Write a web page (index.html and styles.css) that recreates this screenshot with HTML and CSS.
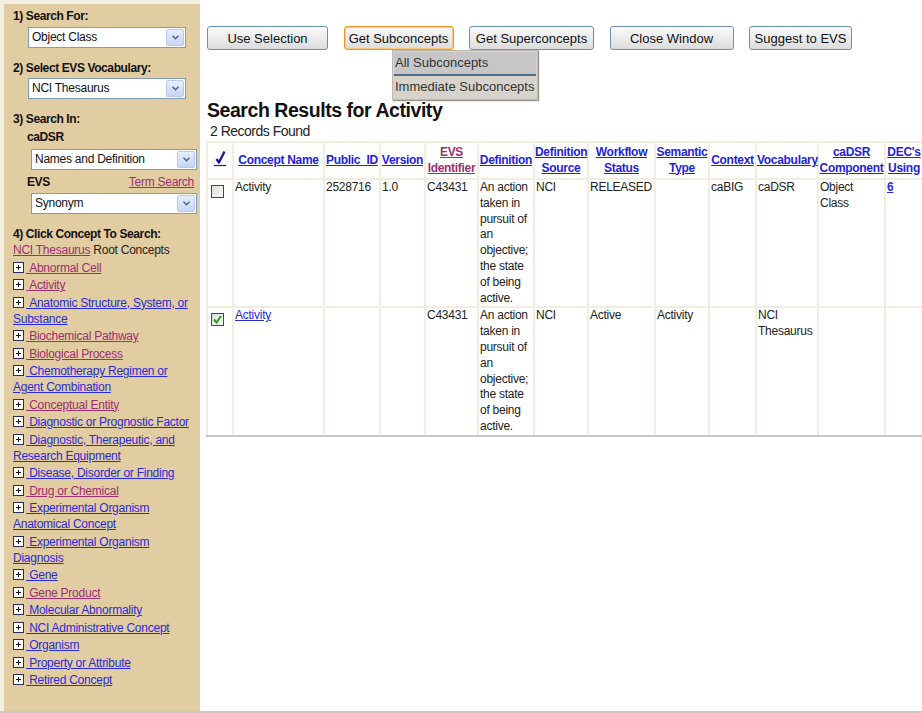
FILE: index.html
```html
<!DOCTYPE html>
<html>
<head>
<meta charset="utf-8">
<link rel="stylesheet" href="styles.css">
</head>
<body>
<div class="page">
  <div class="sidebar">
    <div class="sh">1) Search For:</div>
    <div class="sel s1"><span class="sel-text">Object Class</span><span class="sel-btn"><svg width="7" height="5" viewBox="0 0 7 5"><path d="M0.5 0.8 L3.5 3.8 L6.5 0.8" fill="none" stroke="#4d6185" stroke-width="1.4"/></svg></span></div>
    <div class="sh gap">2) Select EVS Vocabulary:</div>
    <div class="sel s2"><span class="sel-text">NCI Thesaurus</span><span class="sel-btn"><svg width="7" height="5" viewBox="0 0 7 5"><path d="M0.5 0.8 L3.5 3.8 L6.5 0.8" fill="none" stroke="#4d6185" stroke-width="1.4"/></svg></span></div>
    <div class="sh gap">3) Search In:</div>
    <div class="sh sub">caDSR</div>
    <div class="sel s3"><span class="sel-text">Names and Definition</span><span class="sel-btn"><svg width="7" height="5" viewBox="0 0 7 5"><path d="M0.5 0.8 L3.5 3.8 L6.5 0.8" fill="none" stroke="#4d6185" stroke-width="1.4"/></svg></span></div>
    <div class="evs-row"><span class="sh">EVS</span><a class="visited" href="#">Term Search</a></div>
    <div class="sel s4"><span class="sel-text">Synonym</span><span class="sel-btn"><svg width="7" height="5" viewBox="0 0 7 5"><path d="M0.5 0.8 L3.5 3.8 L6.5 0.8" fill="none" stroke="#4d6185" stroke-width="1.4"/></svg></span></div>
    <div class="sh gap">4) Click Concept To Search:</div>
    <div class="root"><a class="visited" href="#">NCI Thesaurus</a> Root Concepts</div>
    <ul class="tree">
      <li><span class="plus"></span> <a class="visited" href="#">&nbsp;Abnormal Cell</a></li>
      <li><span class="plus"></span> <a class="visited" href="#">&nbsp;Activity</a></li>
      <li><span class="plus"></span> <a href="#">&nbsp;Anatomic Structure, System, or Substance</a></li>
      <li><span class="plus"></span> <a class="visited" href="#">&nbsp;Biochemical Pathway</a></li>
      <li><span class="plus"></span> <a class="visited" href="#">&nbsp;Biological Process</a></li>
      <li><span class="plus"></span> <a href="#">&nbsp;Chemotherapy Regimen or Agent Combination</a></li>
      <li><span class="plus"></span> <a class="visited" href="#">&nbsp;Conceptual Entity</a></li>
      <li><span class="plus"></span> <a href="#">&nbsp;Diagnostic or Prognostic Factor</a></li>
      <li><span class="plus"></span> <a href="#">&nbsp;Diagnostic, Therapeutic, and Research Equipment</a></li>
      <li><span class="plus"></span> <a href="#">&nbsp;Disease, Disorder or Finding</a></li>
      <li><span class="plus"></span> <a class="visited" href="#">&nbsp;Drug or Chemical</a></li>
      <li><span class="plus"></span> <a href="#">&nbsp;Experimental Organism Anatomical Concept</a></li>
      <li><span class="plus"></span> <a href="#">&nbsp;Experimental Organism Diagnosis</a></li>
      <li><span class="plus"></span> <a href="#">&nbsp;Gene</a></li>
      <li><span class="plus"></span> <a class="visited" href="#">&nbsp;Gene Product</a></li>
      <li><span class="plus"></span> <a href="#">&nbsp;Molecular Abnormality</a></li>
      <li><span class="plus"></span> <a href="#">&nbsp;NCI Administrative Concept</a></li>
      <li><span class="plus"></span> <a href="#">&nbsp;Organism</a></li>
      <li><span class="plus"></span> <a href="#">&nbsp;Property or Attribute</a></li>
      <li><span class="plus"></span> <a href="#">&nbsp;Retired Concept</a></li>
    </ul>
  </div>
  <div class="main">
    <div class="buttons">
      <button class="btn b-use">Use Selection</button>
      <button class="btn b-sub focus">Get Subconcepts</button>
      <button class="btn b-super">Get Superconcepts</button>
      <button class="btn b-close">Close Window</button>
      <button class="btn b-suggest">Suggest to EVS</button>
    </div>
    <div class="menu">
      <div class="menu-item hl">All Subconcepts</div>
      <div class="menu-sep"></div>
      <div class="menu-item">Immediate Subconcepts</div>
    </div>
    <h1 class="title">Search Results for Activity</h1>
    <div class="count">2 Records Found</div>
    <table class="results">
      <colgroup>
        <col class="c1"><col class="c2"><col class="c3"><col class="c4"><col class="c5"><col class="c6"><col class="c7"><col class="c8"><col class="c9"><col class="c10"><col class="c11"><col class="c12"><col class="c13">
      </colgroup>
      <thead>
        <tr>
          <th><a href="#" class="chk-head"><svg width="12" height="17" viewBox="0 0 12 17"><path d="M2.5 9 L5 12.5 L10.5 1.5" fill="none" stroke="#1a1a99" stroke-width="2.4" stroke-linejoin="round"/><path d="M0 15.5 H12" stroke="#1a1a99" stroke-width="1.2"/></svg></a></th>
          <th><a href="#">Concept Name</a></th>
          <th><a href="#">Public_ID</a></th>
          <th><a href="#">Version</a></th>
          <th><a href="#" class="visited">EVS<br>Identifier</a></th>
          <th><a href="#">Definition</a></th>
          <th><a href="#">Definition<br>Source</a></th>
          <th><a href="#">Workflow<br>Status</a></th>
          <th><a href="#">Semantic<br>Type</a></th>
          <th><a href="#">Context</a></th>
          <th><a href="#">Vocabulary</a></th>
          <th><a href="#">caDSR<br>Component</a></th>
          <th><a href="#">DEC's<br>Using</a></th>
        </tr>
      </thead>
      <tbody>
        <tr>
          <td class="cb"><span class="box"></span></td>
          <td>Activity</td>
          <td>2528716</td>
          <td>1.0</td>
          <td>C43431</td>
          <td>An action taken in pursuit of an objective; the state of being active.</td>
          <td>NCI</td>
          <td>RELEASED</td>
          <td></td>
          <td>caBIG</td>
          <td>caDSR</td>
          <td>Object Class</td>
          <td><a href="#" class="bold">6</a></td>
        </tr>
        <tr>
          <td class="cb"><span class="box checked"><svg width="9" height="9" viewBox="0 0 9 9"><path d="M1 4.5 L3.5 7.5 L8 1" fill="none" stroke="#21a121" stroke-width="2"/></svg></span></td>
          <td><a href="#">Activity</a></td>
          <td></td>
          <td></td>
          <td>C43431</td>
          <td>An action taken in pursuit of an objective; the state of being active.</td>
          <td>NCI</td>
          <td>Active</td>
          <td>Activity</td>
          <td></td>
          <td>NCI Thesaurus</td>
          <td></td>
          <td></td>
        </tr>
      </tbody>
    </table>
  </div>
</div>
</body>
</html>
```

FILE: styles.css
```css
html, body {
  margin: 0;
  padding: 0;
}
body {
  font-family: "Liberation Sans", Arial, sans-serif;
  font-size: 12px;
  letter-spacing: -0.25px;
  color: #222;
  background: #f2efe3;
}
.page {
  display: flex;
  width: 922px;
  height: 713px;
  overflow: hidden;
  border-bottom: 2px solid #c9c9c6;
  box-sizing: border-box;
}
.sidebar {
  width: 196px;
  margin: 4px 0 0 4px;
  padding: 4px 3px 0 9px;
  box-sizing: border-box;
  background: #e2cca2;
  line-height: 16px;
  flex-shrink: 0;
}
.sh {
  font-weight: bold;
  font-size: 12px;
  letter-spacing: -0.4px;
  color: #111;
}
.sh.gap {
  margin-top: 12px;
}
.sh.sub {
  margin-left: 14px;
  margin-top: 2px;
}
.sel {
  display: flex;
  align-items: stretch;
  height: 21px;
  box-sizing: border-box;
  background: #fff;
  border: 1px solid #7f9db9;
  margin-top: 3px;
}
.sel-text {
  flex: 1;
  padding-left: 3px;
  line-height: 19px;
  color: #111;
}
.sel-btn {
  width: 16px;
  margin: 1px;
  display: flex;
  align-items: center;
  justify-content: center;
  background: linear-gradient(#e6eefc, #c7d6f5);
  border: 1px solid #b9c9ea;
  border-radius: 2px;
}
.s1, .s2 {
  margin-left: 15px;
  width: 158px;
}
.s2 { margin-top: 2px; }
.s3, .s4 {
  margin-left: 18px;
  width: 166px;
}
.s3 { margin-top: 4px; }
.evs-row {
  display: flex;
  justify-content: space-between;
  align-items: baseline;
  margin: 4px 3px 0 14px;
}
a {
  color: #2b2bd9;
  text-decoration: underline;
}
a.visited {
  color: #9c2f6f;
}
.root {
  color: #222;
}
.tree {
  list-style: none;
  margin: 0;
  padding: 0;
}
.tree li {
  line-height: 16px;
  padding-top: 1.5px;
}
.plus {
  display: inline-block;
  position: relative;
  width: 11px;
  height: 11px;
  box-sizing: border-box;
  border: 1px solid #2d2d5c;
  background: #fff;
  vertical-align: -1px;
  margin-right: -1px;
}
.plus::before, .plus::after {
  content: "";
  position: absolute;
  background: #111;
}
.plus::before {
  left: 2px;
  top: 4px;
  width: 5px;
  height: 1px;
}
.plus::after {
  left: 4px;
  top: 2px;
  width: 1px;
  height: 5px;
}
.main {
  position: relative;
  flex: 1;
  background: #fff;
  padding: 26px 0 0 6px;
  overflow: hidden;
}
.buttons {
  display: flex;
  gap: 15.5px;
  margin-left: 1px;
}
.btn {
  font-family: inherit;
  font-size: 13px;
  letter-spacing: 0;
  color: #111;
  height: 24px;
  padding: 0;
  border: 1px solid #6f8db0;
  border-radius: 3px;
  background: linear-gradient(#fafafa, #e8e8e8 60%, #dcdcdc);
  flex-shrink: 0;
}
.btn.focus {
  border-color: #e89a2c;
  box-shadow: inset 0 0 0 1px #f8c77a;
}
.b-use { width: 121px; }
.b-sub { width: 110px; }
.b-super { width: 125px; }
.b-close { width: 124px; }
.b-suggest { width: 103px; }
.menu {
  position: absolute;
  left: 192px;
  top: 50px;
  width: 146px;
  background: #d6d3cb;
  border: 1px solid #bcb8ae;
  box-shadow: 1px 1px 1px #9a968c;
  padding: 1px;
  box-sizing: border-box;
  z-index: 2;
  font-size: 13px;
  letter-spacing: 0;
  white-space: nowrap;
}
.menu-item {
  height: 22px;
  line-height: 22px;
  padding-left: 1px;
  color: #333;
}
.menu-item.hl {
  background: #c6c6c6;
}
.menu-sep {
  height: 2px;
  background: #4f6b88;
}
.title {
  margin: 48px 0 0 1px;
  font-size: 19.5px;
  letter-spacing: -0.45px;
  line-height: 24px;
  font-weight: bold;
  color: #111;
}
.count {
  margin: 1px 0 0 4px;
  font-size: 14px;
  letter-spacing: -0.5px;
  line-height: 17px;
  color: #222;
}
.results {
  margin-top: 1px;
  border-collapse: collapse;
  table-layout: fixed;
  width: 716px;
}
.results th, .results td {
  border: 2px solid #f1ede1;
  padding: 0 1px 0 1px;
  line-height: 15.8px;
  vertical-align: top;
  text-align: left;
  overflow: hidden;
}
.results th {
  height: 35px;
  vertical-align: middle;
  text-align: center;
  font-weight: bold;
  letter-spacing: -0.3px;
  padding: 0;
  white-space: nowrap;
  overflow: visible;
}
.results th a {
  color: #2323d6;
}
.results th a.visited {
  color: #9c2f6f;
}
.results td {
  color: #222;
}
.chk-head {
  display: inline-block;
  vertical-align: middle;
}
.c1 { width: 26px; }
.c2 { width: 91px; }
.c3 { width: 56px; }
.c4 { width: 45px; }
.c5 { width: 53px; }
.c6 { width: 56px; }
.c7 { width: 54px; }
.c8 { width: 67px; }
.c9 { width: 54px; }
.c10 { width: 47px; }
.c11 { width: 62px; }
.c12 { width: 67px; }
.c13 { width: 38px; }
.results td.cb {
  padding: 5px 0 0 3px;
}
.box {
  display: flex;
  align-items: center;
  justify-content: center;
  width: 13px;
  height: 13px;
  box-sizing: border-box;
  border: 1px solid #1c5180;
  background: linear-gradient(135deg, #dcdcd7, #fbfbf9);
}
.bold {
  font-weight: bold;
}
.results tbody tr:last-child td {
  border-bottom: 2px solid #c9c9c3;
}
```
